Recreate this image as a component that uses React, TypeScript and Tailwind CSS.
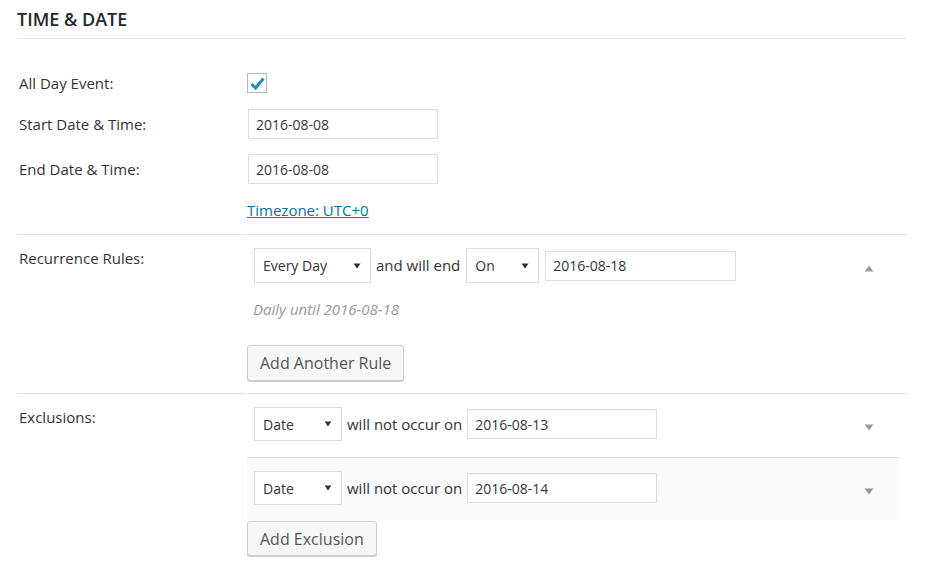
import React from "react";

function Arrow() {
  return (
    <svg width="8" height="6" viewBox="0 0 8 6" className="shrink-0">
      <path d="M0.5 0.5 H7.5 L4 5.5 Z" fill="#333" />
    </svg>
  );
}

function Select({ value, width, height = "h-[35px]" }: { value: string; width: string; height?: string }) {
  return (
    <div
      className={`flex ${height} ${width} shrink-0 items-center justify-between border border-[#ddd] bg-white pl-[8px] pr-[9px] text-[14px] text-[#333]`}
    >
      <span>{value}</span>
      <Arrow />
    </div>
  );
}

function Field({ value, width = "w-[191px]" }: { value: string; width?: string }) {
  return (
    <div
      className={`flex h-[30px] ${width} shrink-0 items-center border border-[#ddd] bg-white pl-[7px] text-[14px] text-[#32373c] shadow-[inset_0_1px_2px_rgba(0,0,0,0.04)]`}
    >
      {value}
    </div>
  );
}

function Toggle({ up }: { up?: boolean }) {
  return (
    <svg width="10" height="7" viewBox="0 0 10 7" className="shrink-0">
      <path d={up ? "M0.5 6.5 H9.5 L5 0.5 Z" : "M0.5 0.5 H9.5 L5 6.5 Z"} fill="#999" />
    </svg>
  );
}

function Button({ label, height = "h-[36px]" }: { label: string; height?: string }) {
  return (
    <div
      className={`inline-flex ${height} items-center rounded-[3px] border border-[#ccc] bg-[#f7f7f7] px-[12px] text-[16px] text-[#555] shadow-[0_1px_0_#ccc]`}
    >
      {label}
    </div>
  );
}

export default function App() {
  const exclusions = ["2016-08-13", "2016-08-14"];

  return (
    <main className="min-h-screen bg-white pl-[17px] pr-[18px] font-['Open_Sans',sans-serif] text-[15px] text-[#333]">
      {/* header */}
      <h2 className="border-b border-[#e5e5e5] pt-[8px] pb-[8px] text-[18px] font-semibold leading-[22px] text-[#23282d]">
        TIME &amp; DATE
      </h2>

      {/* basic dates */}
      <div className="pt-[29px]">
        <div className="grid grid-cols-[230px_1fr]">
          <div className="flex h-[30px] items-center pl-[2px]">All Day Event:</div>
          <div className="flex h-[30px] items-center">
            <div className="flex h-[20px] w-[20px] items-center justify-center border border-[#b4b9be] bg-white">
              <svg width="15" height="13" viewBox="0 0 15 13">
                <path d="M1.5 7 L5.5 11 L13.5 1.5" fill="none" stroke="#1e8cbe" strokeWidth="3" />
              </svg>
            </div>
          </div>
        </div>
        <div className="mt-[11px] grid grid-cols-[231px_1fr]">
          <div className="flex h-[30px] items-center pl-[2px]">Start Date &amp; Time:</div>
          <div className="flex h-[30px] items-center">
            <Field value="2016-08-08" width="w-[190px]" />
          </div>
        </div>
        <div className="mt-[15px] grid grid-cols-[231px_1fr]">
          <div className="flex h-[30px] items-center pl-[2px]">End Date &amp; Time:</div>
          <div className="flex h-[30px] items-center">
            <Field value="2016-08-08" width="w-[190px]" />
          </div>
        </div>
        <div className="mt-[16px] grid grid-cols-[230px_1fr] pb-[14px]">
          <div />
          <a href="#" className="w-fit leading-[20px] text-[#0073aa] underline">
            Timezone: UTC+0
          </a>
        </div>
      </div>

      {/* recurrence */}
      <div className="grid grid-cols-[228px_1fr] gap-x-[2px]">
        <div className="border-t border-[#e1e1e1] pl-[2px] pt-[13px] leading-[20px]">Recurrence Rules:</div>
        <div className="border-t border-[#e1e1e1] pt-[13px] pb-[12px]">
          <div className="flex h-[35px] items-center pl-[7px] pr-[33px]">
            <Select value="Every Day" width="w-[117px]" />
            <span className="ml-[5px] mr-[6px] whitespace-nowrap">and will end</span>
            <Select value="On" width="w-[73px]" />
            <div className="ml-[6px]">
              <Field value="2016-08-18" />
            </div>
            <div className="ml-auto mt-[5px]">
              <Toggle up />
            </div>
          </div>
          <p className="mt-[16px] pl-[6px] leading-[20px] italic text-[#999]">Daily until 2016-08-18</p>
          <div className="mt-[26px]">
            <Button label="Add Another Rule" />
          </div>
        </div>
      </div>

      {/* exclusions */}
      <div className="grid grid-cols-[228px_1fr] gap-x-[2px]">
        <div className="border-t border-[#e1e1e1] pl-[2px] pt-[13px] leading-[20px]">Exclusions:</div>
        <div className="border-t border-[#e1e1e1]">
          <div className="mr-[8px]">
            {exclusions.map((date, i) => (
              <div
                key={date}
                className={`flex items-center pl-[7px] pr-[25px] pt-[13px] ${
                  i > 0 ? "border-t border-[#e1e1e1] bg-[#fafafa] pb-[15px]" : "pb-[16px]"
                }`}
              >
                <div className="flex h-[34px] items-center">
                  <Select value="Date" width="w-[88px]" height="h-[34px]" />
                  <span className="ml-[5px] mr-[5px] whitespace-nowrap">will not occur on</span>
                  <Field value={date} width="w-[190px]" />
                </div>
                <div className="ml-auto mt-[6px]">
                  <Toggle />
                </div>
              </div>
            ))}
          </div>
          <div className="mt-[1px]">
            <Button label="Add Exclusion" height="h-[35px]" />
          </div>
        </div>
      </div>
    </main>
  );
}
